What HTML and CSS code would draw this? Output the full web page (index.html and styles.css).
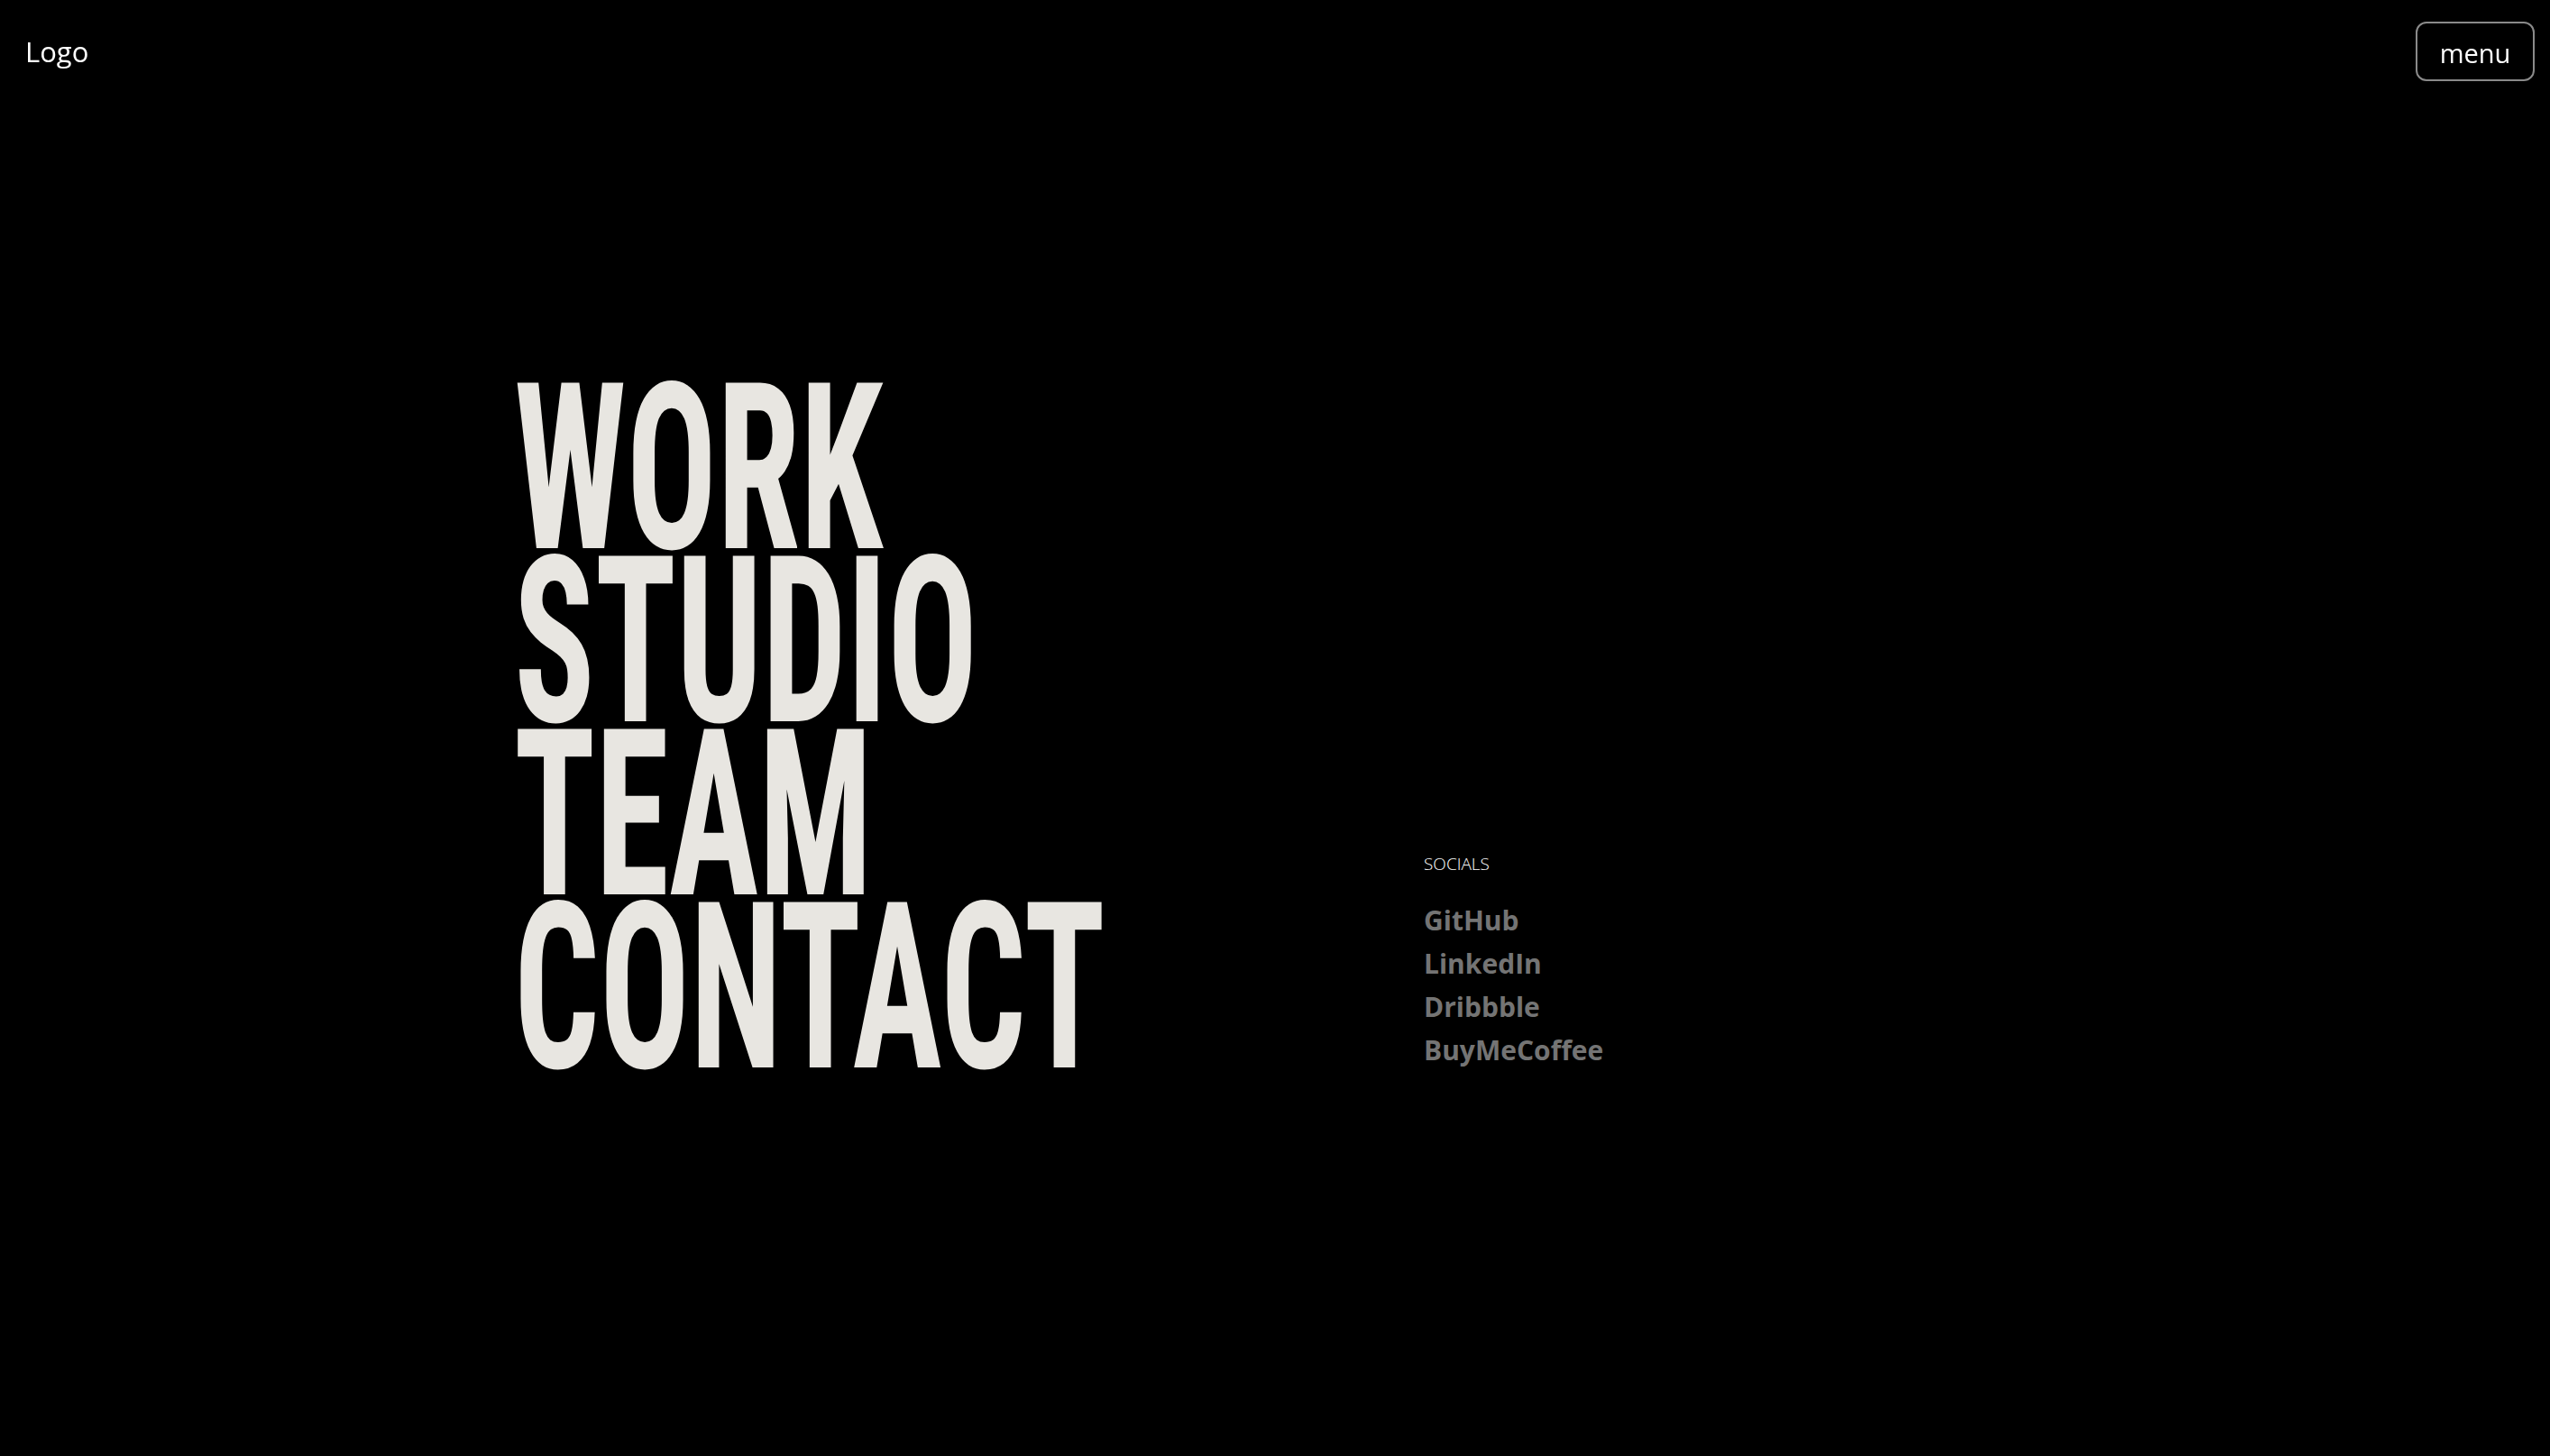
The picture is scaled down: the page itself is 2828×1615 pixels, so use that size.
FILE: index.html
```html
<!DOCTYPE html>
<html lang="en">
<head>
<meta charset="utf-8">
<title>Menu</title>
<link rel="stylesheet" href="styles.css">
</head>
<body>
<header class="site-header">
  <a class="logo" href="#">Logo</a>
  <button class="menu-btn" type="button">menu</button>
</header>
<main class="menu-panel">
  <nav class="primary-nav">
    <ul class="primary-list">
      <li><a href="#">WORK</a></li>
      <li><a href="#">STUDIO</a></li>
      <li><a href="#">TEAM</a></li>
      <li><a href="#">CONTACT</a></li>
    </ul>
  </nav>
  <aside class="socials">
    <p class="socials-title">SOCIALS</p>
    <ul class="socials-list">
      <li><a href="#">GitHub</a></li>
      <li><a href="#">LinkedIn</a></li>
      <li><a href="#">Dribbble</a></li>
      <li><a href="#">BuyMeCoffee</a></li>
    </ul>
  </aside>
</main>
</body>
</html>
```
FILE: styles.css
```css
* { box-sizing: border-box; }
html, body { height: 100%; }
body {
  margin: 0;
  background: #000;
  color: #fff;
  font-family: "Open Sans", "Noto Sans", sans-serif;
  overflow: hidden;
}
a { color: inherit; text-decoration: none; }
ul { list-style: none; margin: 0; padding: 0; }

.site-header {
  position: fixed;
  top: 0; left: 0; right: 0;
  display: flex;
  justify-content: space-between;
  align-items: center;
  padding: 24px 17px 0 28px;
  z-index: 2;
}
.logo {
  font-size: 31px;
  font-weight: 400;
  color: #fff;
}
.menu-btn {
  height: 66px;
  width: 132px;
  display: flex;
  align-items: center;
  justify-content: center;
  padding: 3px 0 0;
  background: transparent;
  border: 2px solid #8a8a8a;
  border-radius: 12px;
  color: #fff;
  font-family: "Open Sans", "Noto Sans", sans-serif;
  font-size: 29px;
  font-weight: 400;
}

.menu-panel {
  height: 100vh;
  display: grid;
  grid-template-columns: 1009px auto;
  align-content: center;
  align-items: end;
  padding-left: 570px;
}

.primary-list {
  transform: scaleX(0.645);
  transform-origin: left center;
  white-space: nowrap;
}
.primary-list a {
  display: block;
  font-family: Roboto, "Liberation Sans", sans-serif;
  font-weight: 700;
  font-stretch: 75%;
  font-size: 258px;
  line-height: 192px;
  color: #e8e6e1;
}

.socials {
  margin-bottom: 3px;
}
.socials-title {
  margin: 0 0 26px;
  font-size: 19px;
  font-weight: 300;
  line-height: 26px;
  color: #fff;
}
.socials-list a {
  display: block;
  font-size: 30px;
  font-weight: 700;
  line-height: 48px;
  color: #747474;
}
```
